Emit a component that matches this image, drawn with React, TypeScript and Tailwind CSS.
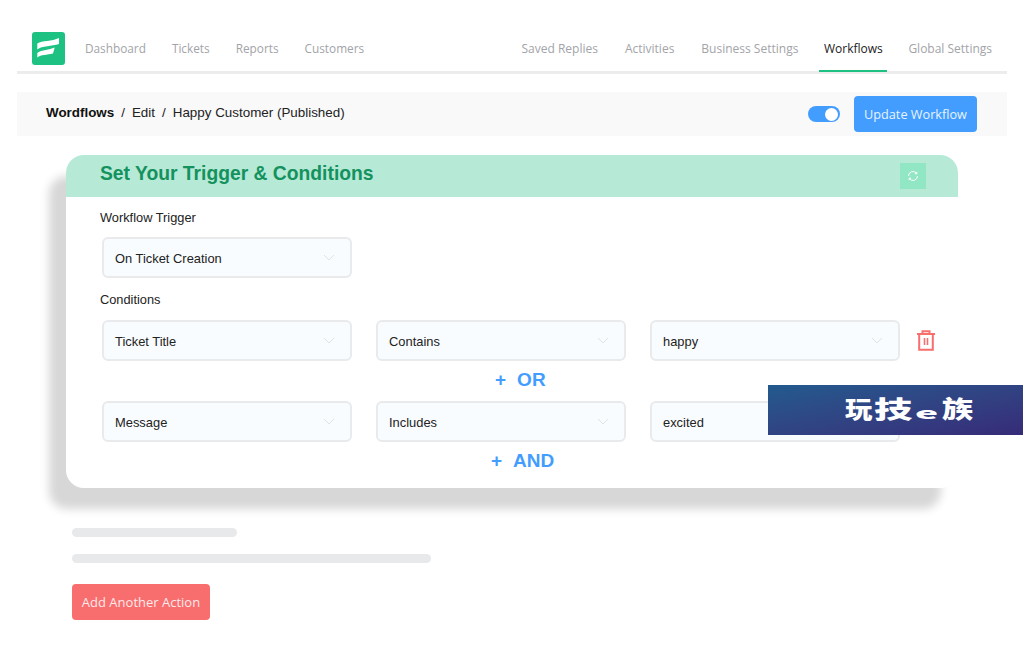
import React from "react";

const left = ["Dashboard", "Tickets", "Reports", "Customers"];

function Chevron() {
  return (
    <svg width="12" height="7" viewBox="0 0 12 7" fill="none" className="shrink-0">
      <path d="M1 1l5 5 5-5" stroke="#dfe3e8" strokeWidth="1" />
    </svg>
  );
}

function Select({ value }: { value: string }) {
  return (
    <div className="flex h-[41px] w-[250px] shrink-0 items-center justify-between rounded-[6px] border-2 border-[#e8eaec] bg-[#f9fcff] pl-[11px] pr-[15px] text-[12.9px] text-[#222]">
      <span className="pt-[2px]">{value}</span>
      <Chevron />
    </div>
  );
}

function Row({ a, b, c, trash }: { a: string; b: string; c: string; trash?: boolean }) {
  return (
    <div className="flex h-[41px] items-center pl-[36px]">
      <Select value={a} />
      <div className="ml-[24px]"><Select value={b} /></div>
      <div className="ml-[24px]"><Select value={c} /></div>
      {trash && (
        <svg width="18" height="21" viewBox="0 0 18 21" fill="none" className="ml-[17px]">
          <path d="M0 4h18M5.5 4V1.2h7V4M2.2 4v15.8h13.6V4" stroke="#f86d6e" strokeWidth="2" />
          <path d="M7.5 8v7M10.5 8v7" stroke="#f86d6e" strokeWidth="1.6" />
        </svg>
      )}
    </div>
  );
}

export default function App() {
  return (
    <div className="relative h-[668px] w-[1024px] overflow-hidden bg-white font-['Liberation_Sans',sans-serif]">
      <div className="px-[17px] pt-[24px]">
        <header className="flex h-[50px] items-stretch justify-between border-b-[3px] border-[#ececec] font-['Open_Sans',sans-serif] text-[#a2a4a8]">
          <div className="flex items-center text-[11.8px]">
            <svg width="33" height="33" viewBox="0 0 33 33" className="ml-[15px] mt-[2px]">
              <rect width="33" height="33" rx="3" fill="#1dc283" />
              <path d="M5.3 11.5C10 8.5 20 9.5 27 6V12C20 14.5 10 13.5 5.3 17.5Z" fill="#fff" />
              <path d="M5.3 21C10 17.5 17 18 22.7 15.5L21 21.5C15 23 9 22.5 5.3 25.5Z" fill="#fff" />
            </svg>
            <nav className="ml-[20px] flex gap-[26px] pt-[2px]">
              {left.map((t) => <span key={t}>{t}</span>)}
            </nav>
          </div>
          <nav className="mr-[15px] flex items-center pt-[2px] text-[12px]">
            <span>Saved Replies</span>
            <span className="ml-[27px]">Activities</span>
            <span className="ml-[27px]">Business Settings</span>
            <span className="relative ml-[21px] flex h-full w-[68px] items-center justify-center text-[#222]">
              Workflows
              <span className="absolute bottom-[-1px] left-0 h-[2px] w-full bg-[#1dc283]" />
            </span>
            <span className="ml-[21px]">Global Settings</span>
          </nav>
        </header>

        <div className="mt-[18px] flex h-[44px] items-center justify-between bg-[#f9f9f9] pl-[29px] pr-[30px]">
          <div className="pb-[1px] text-[13.4px] text-[#222]">
            <span className="font-bold text-[#111]">Wordflows</span>
            <span className="mx-[7px]">/</span>Edit<span className="mx-[7px]">/</span>Happy Customer (Published)
          </div>
          <div className="flex items-center gap-[14px]">
            <div className="flex h-[16px] w-[32px] items-center justify-end rounded-full bg-[#429dff] pr-[2px]">
              <div className="h-[13px] w-[13px] rounded-full bg-white" />
            </div>
            <div className="flex h-[36px] w-[123px] items-center justify-center rounded-[4px] bg-[#429dff] pt-[1px] font-['Open_Sans',sans-serif] text-[12.7px] text-[#e8f3ff]">
              Update Workflow
            </div>
          </div>
        </div>

        <section className="ml-[49px] mt-[19px] h-[333px] w-[892px] rounded-[18px] bg-white shadow-[-17px_21px_10px_#d7d7d7]">
          <div className="flex h-[42px] items-center justify-between rounded-t-[18px] bg-[#b7e9d7] pl-[34px] pr-[32px]">
            <h1 className="pb-[3px] text-[19.3px] font-bold text-[#13925e]">Set Your Trigger &amp; Conditions</h1>
            <div className="flex h-[26px] w-[26px] items-center justify-center rounded-[1px] bg-[#91e6c3]">
              <svg width="12" height="12" viewBox="0 0 12 12" fill="none" stroke="#fff" strokeWidth="1">
                <path d="M1.5 6a4.5 4.5 0 0 1 8-2.8M10.5 6a4.5 4.5 0 0 1-8 2.8" />
                <path d="M9.8 1.8v2h-2M2.2 10.2v-2h2" />
              </svg>
            </div>
          </div>
          <div className="pl-[34px] pt-[13px] text-[12.8px] leading-[16px] text-[#222]">Workflow Trigger</div>
          <div className="mt-[11px] pl-[36px]"><Select value="On Ticket Creation" /></div>
          <div className="pl-[34px] pt-[14px] text-[12.8px] leading-[16px] text-[#222]">Conditions</div>
          <div className="mt-[12px]"><Row a="Ticket Title" b="Contains" c="happy" trash /></div>
          <div className="flex h-[40px] items-center pb-[2px] pl-[429px] text-[19px] font-bold text-[#429dff]">
            <span className="mr-[11px]">+</span>OR
          </div>
          <Row a="Message" b="Includes" c="excited" />
          <div className="flex h-[40px] items-center pb-[2px] pl-[425px] text-[19px] font-bold text-[#429dff]">
            <span className="mr-[11px]">+</span>AND
          </div>
        </section>

        <div className="ml-[55px] mt-[40px] h-[9px] w-[165px] rounded-full bg-[#e8e9eb]" />
        <div className="ml-[55px] mt-[17px] h-[9px] w-[359px] rounded-full bg-[#e8e9eb]" />
        <div className="ml-[55px] mt-[21px] flex h-[36px] w-[138px] items-center justify-center rounded-[4px] bg-[#f86d6e] pt-[2px] font-['Open_Sans',sans-serif] text-[13px] text-[#ffe9e9]">
          Add Another Action
        </div>
      </div>

      <div className="absolute left-[768px] top-[385px] flex h-[50px] w-[255px] items-center bg-gradient-to-br from-[#215a8e] to-[#362b78] pb-[5px] pl-[77px] font-['Noto_Sans_CJK_SC',sans-serif] text-[24px] font-black leading-none text-white">
        <span className="flex items-end whitespace-nowrap">
          <span className="inline-block w-[29px] origin-left scale-x-[1.14]">玩</span>
          <span className="inline-block w-[41px] origin-left scale-x-[1.6]">技</span>
          <span className="inline-block w-[27px] origin-left scale-x-[2.6] text-[15px]">e</span>
          <span className="inline-block origin-left scale-x-[1.3]">族</span>
        </span>
      </div>
    </div>
  );
}
